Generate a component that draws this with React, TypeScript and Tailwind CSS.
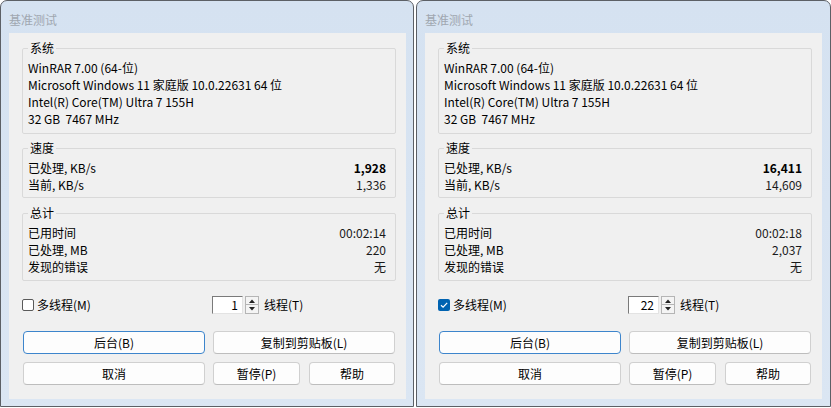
import React from "react";

type Bench = {
  speed: string;
  current: string;
  elapsed: string;
  mb: string;
  threads: string;
  multi: boolean;
};

const sysLines = [
  "WinRAR 7.00 (64-位)",
  "Microsoft Windows 11 家庭版 10.0.22631 64 位",
  "Intel(R) Core(TM) Ultra 7 155H",
  "32 GB  7467 MHz",
];

function Group({ title, className, children }: { title: string; className: string; children: React.ReactNode }) {
  return (
    <fieldset className={"ml-[13px] mr-[10px] border border-[#d9d9d9] rounded-[2px] pl-[5px] pr-[9px] pt-[3px] " + className}>
      <legend className="px-[2px] leading-[16px]">{title}</legend>
      {children}
    </fieldset>
  );
}

function Row({ label, value, bold }: { label: string; value?: string; bold?: boolean }) {
  return (
    <div className="flex justify-between h-[17px] leading-[17px]">
      <span className="whitespace-pre">{label}</span>
      {value && <span className={bold ? "font-bold text-black" : "text-[#1a1a1a]"}>{value}</span>}
    </div>
  );
}

function Btn({ label, w, focus }: { label: string; w: string; focus?: boolean }) {
  return (
    <div
      className={
        "h-[23px] flex items-center justify-center rounded-[4px] bg-[#fdfdfd] leading-[16px] " +
        w +
        (focus ? " border border-[#3d85cc]" : " border border-[#d0d0d0] border-b-[#bdbdbd]")
      }
    >
      {label}
    </div>
  );
}

function Dialog({ b, w, pr }: { b: Bench; w: string; pr: string }) {
  return (
    <div className={"h-[407px] flex flex-col border border-[#5c6066] rounded-t-[7px] bg-gradient-to-b from-[#d5e2f1] to-[#dbe6f3] " + w}>
      <div className="h-[32px] pl-[8px] pt-[11px] leading-[16px] text-[#a0a7b0]">基准测试</div>
      <div className={"flex-1 flex pl-[8px] pb-[7px] " + pr}>
        <div className="flex-1 bg-[#f0f0f0] pt-[7px] flex flex-col">
          <Group title="系统" className="pb-[6px]">
            {sysLines.map((l) => (
              <Row key={l} label={l} />
            ))}
          </Group>
          <Group title="速度" className="pb-[4px] mt-[6px]">
            <Row label="已处理, KB/s" value={b.speed} bold />
            <Row label="当前, KB/s" value={b.current} />
          </Group>
          <Group title="总计" className="pb-[5px] mt-[7px]">
            <Row label="已用时间" value={b.elapsed} />
            <Row label="已处理, MB" value={b.mb} />
            <Row label="发现的错误" value="无" />
          </Group>

          <div className="mt-[15px] h-[18px] flex items-center">
            <div className="ml-[13px] w-[190px] flex items-center">
              {b.multi ? (
                <div className="w-[12px] h-[12px] rounded-[2px] bg-[#0063b1] flex items-center justify-center">
                  <svg width="10" height="10" viewBox="0 0 10 10">
                    <path d="M2 5.2 L4.1 7.2 L8.2 2.9" stroke="#fff" strokeWidth="1.2" fill="none" />
                  </svg>
                </div>
              ) : (
                <div className="w-[12px] h-[12px] rounded-[2px] border border-[#5a5a5a] bg-white" />
              )}
              <span className="ml-[3px] leading-[16px]">多线程(M)</span>
            </div>
            <div className="w-[31px] h-[18px] bg-white border border-t-[#7a7a7a] border-l-[#7a7a7a] border-r-[#e3e3e3] border-b-[#e3e3e3] flex items-center justify-end pr-[4px] leading-[16px]">
              {b.threads}
            </div>
            <div className="ml-[2px] w-[14px] h-[18px] flex flex-col">
              <div className="h-[9px] border border-[#b5b5b5] bg-[#f4f4f4] flex items-center justify-center">
                <svg width="6" height="4" viewBox="0 0 6 4">
                  <path d="M0 4 L3 0.5 L6 4 Z" fill="#222" />
                </svg>
              </div>
              <div className="h-[9px] border border-t-0 border-[#b5b5b5] bg-[#f4f4f4] flex items-center justify-center">
                <svg width="6" height="4" viewBox="0 0 6 4">
                  <path d="M0 0 L3 3.5 L6 0 Z" fill="#222" />
                </svg>
              </div>
            </div>
            <span className="ml-[5px] leading-[16px]">线程(T)</span>
          </div>

          <div className="mt-[17px] ml-[14px] flex gap-[8px]">
            <Btn label="后台(B)" w="w-[182px]" focus />
            <Btn label="复制到剪贴板(L)" w="w-[182px]" />
          </div>
          <div className="mt-[8px] ml-[14px] flex">
            <Btn label="取消" w="w-[182px]" />
            <div className="w-[8px]" />
            <Btn label="暂停(P)" w="w-[87px]" />
            <div className="w-[9px]" />
            <Btn label="帮助" w="w-[86px]" />
          </div>
        </div>
      </div>
    </div>
  );
}

export default function App() {
  const left: Bench = { speed: "1,928", current: "1,336", elapsed: "00:02:14", mb: "220", threads: "1", multi: false };
  const right: Bench = { speed: "16,411", current: "14,609", elapsed: "00:02:18", mb: "2,037", threads: "22", multi: true };
  return (
    <div className="w-[831px] h-[408px] bg-white flex gap-[2px] text-[12px] text-black font-['Noto_Sans_CJK_SC','Noto_Sans',sans-serif]">
      <Dialog b={left} w="w-[414px]" pr="pr-[7px]" />
      <Dialog b={right} w="w-[415px]" pr="pr-[8px]" />
    </div>
  );
}
